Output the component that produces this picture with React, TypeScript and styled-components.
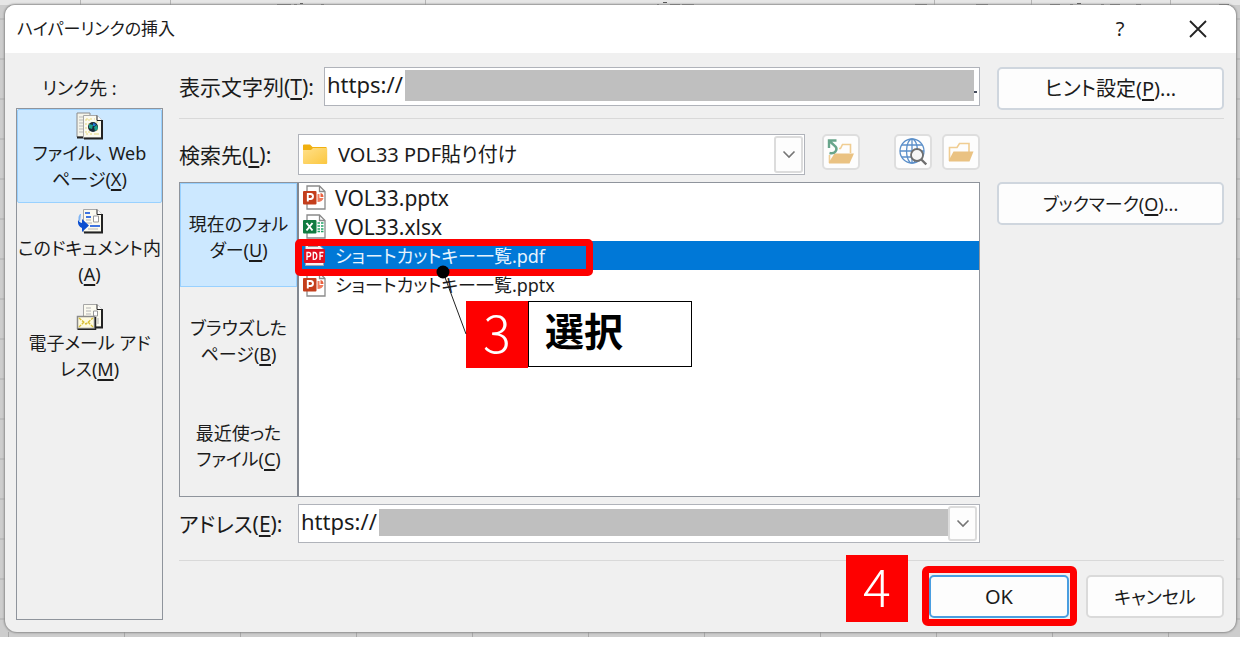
import React from "react";
import styled, { createGlobalStyle, css } from "styled-components";

const GlobalStyle = createGlobalStyle`
  *, *::before, *::after { box-sizing: border-box; }
  body {
    margin: 0;
    background: #fff;
    color: #1b1b1b;
    font-family: "Noto Sans", "Noto Sans CJK JP", sans-serif;
    font-size: 20px;
    line-height: 26px;
    font-feature-settings: "palt";
  }
  button, input, select {
    font: inherit;
    color: inherit;
    font-feature-settings: inherit;
    margin: 0;
    padding: 0;
  }
  u { text-decoration-thickness: 2px; text-underline-offset: 3px; }
`;

/* Spreadsheet that shows round the edge of the dialog */
const Sheet = styled.div`
  padding: 5px 4px 5px 5px;
  background:
    repeating-linear-gradient(90deg, transparent 0 8px, #a8a8a8 8px 9px, transparent 9px 116px) 0 100% / 100% 5px no-repeat,
    repeating-linear-gradient(180deg, transparent 0 18px, #bdbdbd 18px 20px, transparent 20px 40px) 0 0 / 100% 100%,
    #cdcdcd;
  position: relative;
`;

const RibbonEdge = styled.svg`
  position: absolute;
  left: 0;
  top: 0;
  display: block;
`;

const Dialog = styled.main`
  position: relative;
  background: #f0f0f0;
  border-radius: 10px 10px 12px 12px;
  overflow: hidden;
  box-shadow: 0 0 2px 1px #8e8e8e;
`;

const TitleBar = styled.header`
  display: flex;
  align-items: center;
  height: 48px;
  padding: 0 20px 0 12px;
  background: #fff;
`;

const Title = styled.h1`
  flex: 1;
  margin: 0;
  font-size: 17px;
  font-weight: 400;
`;

const TitleButton = styled.button`
  display: grid;
  place-items: center;
  width: 36px;
  height: 36px;
  margin-left: 42px;
  border: 0;
  background: none;
`;

const Body = styled.div`
  display: grid;
  grid-template-columns: 147px minmax(0, 1fr);
  column-gap: 16px;
  padding: 14px 12px 12px 11px;
`;

const Sidebar = styled.nav`
  display: flex;
  flex-direction: column;
`;

const SidebarLabel = styled.div`
  height: 41px;
  padding: 8px 20px 0 0;
  font-size: 18px;
  text-align: center;
`;

const LinkTargets = styled.div`
  flex: 1;
  border: 1px solid #8f949c;
`;

const selectedFill = css`
  background: #cce8ff;
  border-color: #99d1ff;
`;

const TargetButton = styled.button<{ $selected?: boolean }>`
  display: flex;
  flex-direction: column;
  align-items: center;
  width: 100%;
  height: 94px;
  margin-bottom: 1px;
  padding-top: 2px;
  border: 1px solid transparent;
  border-radius: 2px;
  background: none;
  font-size: 18px;
  white-space: nowrap;
  ${(p) => p.$selected && selectedFill}
  svg { flex: none; }
`;

const Main = styled.div`
  min-width: 0;
  padding-bottom: 2px;
`;

const Columns = styled.div`
  display: grid;
  grid-template-columns: minmax(0, 1fr) 227px;
  column-gap: 17px;
  align-items: start;
`;

const Divider = styled.hr`
  height: 1px;
  margin: 8px 0 15px;
  border: 0;
  background: #d9d9d9;
`;

const FooterDivider = styled(Divider)`
  margin: 17px 0 14px;
`;

const Field = styled.div`
  display: flex;
  align-items: center;
`;

const AddressField = styled(Field)`
  margin-top: 7px;
`;

const FieldLabel = styled.label<{ $wide?: boolean }>`
  flex: none;
  width: ${(p) => (p.$wide ? 145 : 119)}px;
  font-size: 21px;
  white-space: nowrap;
`;

const TextBox = styled.div`
  display: flex;
  align-items: center;
  flex: 1;
  min-width: 0;
  height: 39px;
  padding-right: 2px;
  border: 1px solid #b0b3ba;
  background: #fff;
`;

const UrlInput = styled.input`
  width: 80px;
  height: 30px;
  margin-bottom: 6px;
  padding-left: 2px;
  border: 0;
  outline: 0;
  background: none;
  font-size: 22px;
`;

const Masked = styled.span<{ $height: number }>`
  flex: 1;
  height: ${(p) => p.$height}px;
  margin-bottom: 2px;
  background: #bfbfbf;
`;

const Tick = styled.span`
  width: 3px;
  height: 2px;
  margin-top: 10px;
  background: #454c5c;
`;

const ArrowButton = styled.button`
  display: grid;
  place-items: center;
  flex: none;
  width: 29px;
  height: 35px;
  border: 2px solid #dcdcdc;
  border-radius: 3px;
  background: #fdfdfd;
`;

const FolderPicker = styled.div`
  position: relative;
  flex: 1;
  height: 41px;
`;

const FolderSelect = styled.select`
  appearance: none;
  width: 100%;
  height: 100%;
  padding: 0 32px 0 39px;
  border: 1px solid #b0b3ba;
  border-radius: 0;
  background: #fff;
`;

const PickerIcon = styled.span`
  position: absolute;
  left: 4px;
  top: 10px;
  pointer-events: none;
  svg { display: block; }
`;

const PickerArrow = styled.span`
  position: absolute;
  right: 2px;
  top: 2px;
  display: grid;
  place-items: center;
  width: 29px;
  height: 37px;
  border: 2px solid #dcdcdc;
  border-radius: 3px;
  background: #fdfdfd;
  pointer-events: none;
`;

const ToolButton = styled.button<{ $gap: number }>`
  display: grid;
  place-items: center;
  flex: none;
  align-self: flex-start;
  width: 38px;
  height: 36px;
  margin-left: ${(p) => p.$gap}px;
  border: 2px solid #dedede;
  border-radius: 5px;
  background: #fdfdfd;
`;

const PushButton = styled.button<{ $tone?: "blue" | "plain"; $kana?: boolean }>`
  width: 100%;
  height: 43px;
  border: 2px solid ${(p) => (p.$tone === "blue" ? "#4a9ee0" : p.$tone === "plain" ? "#dadada" : "#cfd6de")};
  border-radius: 5px;
  background: #fdfdfd;
  font-size: ${(p) => (p.$kana ? 18 : 20)}px;
  white-space: nowrap;
`;

const BookmarkSlot = styled.div`
  padding-top: 48px;
`;

const Browser = styled.div`
  display: grid;
  grid-template-columns: 117px minmax(0, 1fr);
  height: 315px;
  margin-top: 7px;
  border: 1px solid #8f949c;
`;

const Places = styled.div`
  display: grid;
  grid-template-rows: repeat(3, 1fr);
`;

const PlaceButton = styled.button<{ $selected?: boolean }>`
  padding-top: 4px;
  border: 1px solid transparent;
  background: none;
  font-size: 18px;
  white-space: nowrap;
  ${(p) => p.$selected && selectedFill}
`;

const FileList = styled.ul`
  margin: 0;
  padding: 0;
  border-left: 2px solid #828790;
  background: #fff;
  list-style: none;
`;

const FileRow = styled.li`
  position: relative;
`;

const FileButton = styled.button<{ $selected?: boolean; $kana?: boolean }>`
  display: flex;
  align-items: center;
  gap: 9px;
  width: 100%;
  height: 29px;
  padding-left: 4px;
  border: 0;
  background: ${(p) => (p.$selected ? "#0078d7" : "none")};
  color: ${(p) => (p.$selected ? "#e6f3fd" : "inherit")};
  font-size: ${(p) => (p.$kana ? 18 : 21)}px;
  white-space: nowrap;
  svg { flex: none; }
`;

const Highlight = styled.span`
  position: absolute;
  z-index: 1;
  left: -4px;
  top: -2px;
  width: 298px;
  height: 37px;
  border: 7px solid #fe0000;
  border-radius: 5px;
  pointer-events: none;
`;

const Leader = styled.svg`
  position: absolute;
  z-index: 3;
  left: 136px;
  top: 23px;
  pointer-events: none;
`;

const Callout = styled.div`
  position: absolute;
  z-index: 2;
  left: 167px;
  top: 60px;
  display: flex;
`;

const Step = styled.span<{ $raise: number }>`
  display: grid;
  place-items: center;
  width: 62px;
  height: 67px;
  padding-bottom: ${(p) => p.$raise}px;
  background: #fe0000;
  color: #fff;
  font-family: "Noto Sans CJK JP", sans-serif;
  font-size: 52px;
  font-weight: 300;
  line-height: 48px;
`;

const CalloutText = styled.strong`
  width: 164px;
  height: 66px;
  padding: 0 16px;
  border: 1px solid #000;
  background: #fff;
  color: #000;
  font-family: "Noto Sans CJK JP", sans-serif;
  font-size: 39px;
  line-height: 54px;
`;

const Actions = styled.div`
  display: flex;
  justify-content: flex-end;
  gap: 17px;
`;

const Action = styled.div<{ $width: number }>`
  position: relative;
  width: ${(p) => p.$width}px;
`;

const ActionFrame = styled.span`
  position: absolute;
  inset: -9px -8px -8px -7px;
  border: 7px solid #fe0000;
  border-radius: 6px;
  pointer-events: none;
`;

const ActionStep = styled.div`
  position: absolute;
  right: 161px;
  bottom: -4px;
`;

const Chevron = () => (
  <svg width="14" height="9" viewBox="0 0 14 9" fill="none" stroke="#757575" strokeWidth="1.6">
    <path d="M1.5 1.5 7 7l5.500-5.500" />
  </svg>
);

const FolderIcon = () => (
  <svg width="26" height="21" viewBox="0 0 26 21">
    <defs>
      <linearGradient id="folder" x1="0" y1="0" x2="1" y2="1">
        <stop offset="0" stopColor="#ffe08a" />
        <stop offset="1" stopColor="#fbc73f" />
      </linearGradient>
    </defs>
    <path d="M1 1.500Q1 .5 2 .5h6l2.500 2.500H24.500V8H1z" fill="#f0b010" />
    <path d="M1 6h8l2-2H24.500q.7 0 .7.8V19q0 1-1 1H2q-1 0-1-1z" fill="url(#folder)" />
  </svg>
);

const OpenFolderIcon = () => (
  <svg width="26" height="21" viewBox="0 0 26 21">
    <path d="M1.500 19V5.500H9L11.500 1.500H21V10" fill="none" stroke="#f0cd92" strokeWidth="1.600" />
    <path d="M1 19.500V18L5.500 9.500H25.500L21.500 19.500z" fill="#eac282" />
  </svg>
);

const UpFolderIcon = () => (
  <svg width="28" height="26" viewBox="0 0 28 26">
    <path d="M2.500 24V16M12 9.500h1.500l2-4h8V14" fill="none" stroke="#f0cd92" strokeWidth="1.600" />
    <path d="M2 24.500V23L7.500 14.500H27L22.500 24.500z" fill="#eac282" />
    <path d="M2 9V1.500H9.500M2.500 2 8.500 7.500Q10.500 10 8.500 12.500 6.500 15 2.500 14" fill="none" stroke="#68a58b" strokeWidth="2.400" />
  </svg>
);

const WebSearchIcon = () => (
  <svg width="28" height="28" viewBox="0 0 28 28" fill="none">
    <g stroke="#5b8fc9" strokeWidth="1.300">
      <circle cx="13" cy="13" r="12" />
      <ellipse cx="13" cy="13" rx="5.500" ry="12" />
      <path d="M13 1v24M1 13h24M3 7h20M3 19h20" />
    </g>
    <circle cx="18" cy="17" r="6" fill="#f6f6f6" stroke="#6e6e6e" strokeWidth="1.800" />
    <path d="m22.300 21.500 5 5" stroke="#6e6e6e" strokeWidth="2.400" />
  </svg>
);

const OfficeIcon = ({ kind }: { kind: "P" | "X" }) => {
  const tone = kind === "P" ? "#c43e1c" : "#107c41";
  return (
    <svg width="23" height="25" viewBox="0 0 23 25">
      <path d="M4 1H16.500L22 6.500V24H4z" fill="#fff" stroke="#8a8a8a" strokeWidth="1.300" />
      <path d="M16.500 1v5.500H22" fill="none" stroke="#8a8a8a" strokeWidth="1.300" />
      {kind === "P" ? (
        <g fill="#f07a5c">
          <path d="M14.500 9v8q5 0 6-4h-4V9z" />
          <path d="M17.500 8q3 .5 3 4h-3z" fill="#e9603f" />
        </g>
      ) : (
        <path d="M14.500 9h2.500m1 0h2.500M14.500 12h2.500m1 0h2.500M14.500 15h2.500m1 0h2.500M14.500 17.500h2.500m1 0h2.500" stroke="#21a366" strokeWidth="1.600" />
      )}
      <rect x="0" y="6" width="13.500" height="13.500" rx="1" fill={tone} />
      {kind === "P" ? (
        <path d="M4.800 16.500V9H7.500q2.500.2 2.500 2.500T7.500 14H5" fill="none" stroke="#fff" strokeWidth="1.900" />
      ) : (
        <path d="m3.500 9 6 7.500M9.500 9l-6 7.500" stroke="#fff" strokeWidth="2" />
      )}
    </svg>
  );
};

const PdfIcon = () => (
  <svg width="23" height="25" viewBox="0 0 23 25">
    <path d="M2.500 1H15l5.500 5V22.500h-18z" fill="#f3f3f3" stroke="#9aa6b4" />
    <path d="M5 3.500h10" stroke="#999" />
    <rect x="1" y="6" width="21" height="14" rx="1" fill="#e01020" />
    <path d="M4 17V9.500h1.800q1.900 0 1.900 2t-1.900 2H4.200M10.300 16.300V9.500h1.200q2.300.2 2.300 3.400t-2.300 3.400zM17 17V9.500h3.500M17 13h3" fill="none" stroke="#fff" strokeWidth="1.300" />
  </svg>
);

const Page = ({ x, y }: { x: number; y: number }) => (
  <g transform={`translate(${x} ${y})`}>
    <path d="M.5.5H14l5 5V23H.5z" fill="#fbfaf0" stroke="#a7a7a7" />
    <path d="M14 .5v5h5" fill="#fff" stroke="#222" />
    <path d="M19 5v18.500H1" fill="none" stroke="#222" strokeWidth="2" />
  </g>
);

const WebPageIcon = () => (
  <svg width="28" height="28" viewBox="0 0 28 28">
    <path d="M1 1h13v24H1z" fill="#f4f4ea" stroke="#8c8c8c" />
    <path d="M3 5h4M3 8h4M3 11h4M3 14h4M3 17h4M3 20h4" stroke="#b9b9b9" />
    <path d="M1 25.500h8" stroke="#222" strokeWidth="2" />
    <Page x={7} y={3} />
    <path d="M10 7v16M13 7v16M21 9v14M10 7h9M10 22h13" stroke="#e6d77c" strokeDasharray="2 2" />
    <circle cx="17" cy="15" r="5" fill="#1b2b3a" />
    <path d="m13 12 4 1-1 4-3-1zM18 15l3-2 1 4-3 2z" fill="#1fa08c" />
    <path d="m17 11 3 1-1 2-2 0z" fill="#1e78d8" />
  </svg>
);

const DocumentIcon = () => (
  <svg width="28" height="28" viewBox="0 0 28 28">
    <g transform="translate(0 1)">
      <Page x={7} y={1} />
      <path d="M9 5h5M14 18h10M10 9h5" stroke="#3f74e0" strokeWidth="1.800" />
      <path d="M10 12h5M10 15h6M12 21h10" stroke="#b4b4b4" />
      <path d="M17.500 8h5v6h-5z" fill="#fff" stroke="#999" />
      <path d="M4 6Q0 14 6 15V11L13 17.500 6 24V20Q-1 17 4 6z" fill="#0c4fd0" />
      <path d="M4 6Q1 10 4 14L5 6z" fill="#7db4f5" />
    </g>
  </svg>
);

const MailIcon = () => (
  <svg width="28" height="28" viewBox="0 0 28 28">
    <Page x={7} y={2} />
    <path d="M10 6h5M10 9h5M10 12h5M22 16v6" stroke="#b4b4b4" />
    <path d="M17.500 9h4v5h-4z" fill="#fff" stroke="#999" />
    <path d="M1.500 14.500h17v12h-17z" fill="#fffbe0" stroke="#8a8a8a" strokeWidth="1.500" />
    <path d="m3 16 7 6 7-6M3 25l5-5M17 25l-5-5" fill="none" stroke="#d9c037" strokeWidth="1.400" strokeDasharray="3 1" />
    <path d="M19.500 15v12.500H1.500" fill="none" stroke="#222" strokeWidth="1.500" />
  </svg>
);

export default function App() {
  return (
    <>
      <GlobalStyle />
      <Sheet>
        <RibbonEdge width="100%" height="5" aria-hidden="true">
          <rect width="100%" height="5" fill="#e6e6e6" />
          <path d="M80.500 0v5M170.500 0v5M425.500 0v5M934.500 0v5M1031.500 0v5M1170.500 0v5" stroke="#b5b5b5" />
          <path d="M277 4.500h14M294 4.500h3M300 3.500h3M321 4.500h3M657 4.500h2M663 2.500h4M670 4.500h10M682 4.500h12M915 4.500h12M976 4.500h12M1050 4.500h10M1070 4.500h3M1077 3.500h4M1101 4.500h3M1110 4.500h10M1136 4.500h5M1219 4.500h10" stroke="#555" />
        </RibbonEdge>
        <Dialog>
          <TitleBar>
            <Title>ハイパーリンクの挿入</Title>
            <TitleButton aria-label="ヘルプ">?</TitleButton>
            <TitleButton aria-label="閉じる">
              <svg width="18" height="18" viewBox="0 0 18 18" stroke="#222" strokeWidth="1.800">
                <path d="m1 1 16 16M17 1 1 17" />
              </svg>
            </TitleButton>
          </TitleBar>
          <Body>
            <Sidebar>
              <SidebarLabel>リンク先 :</SidebarLabel>
              <LinkTargets>
                <TargetButton $selected>
                  <WebPageIcon />
                  <span>ファイル、 Web<br />ページ(<u>X</u>)</span>
                </TargetButton>
                <TargetButton>
                  <DocumentIcon />
                  <span>このドキュメント内<br />(<u>A</u>)</span>
                </TargetButton>
                <TargetButton>
                  <MailIcon />
                  <span>電子メール アド<br />レス(<u>M</u>)</span>
                </TargetButton>
              </LinkTargets>
            </Sidebar>
            <Main>
              <Columns>
                <Field>
                  <FieldLabel $wide htmlFor="display">表示文字列(<u>T</u>):</FieldLabel>
                  <TextBox>
                    <UrlInput id="display" defaultValue="https://" />
                    <Masked $height={31} />
                    <Tick />
                  </TextBox>
                </Field>
                <PushButton>ヒント設定(<u>P</u>)...</PushButton>
              </Columns>
              <Divider />
              <Columns>
                <div>
                  <Field>
                    <FieldLabel htmlFor="folder-select">検索先(<u>L</u>):</FieldLabel>
                    <FolderPicker>
                      <FolderSelect id="folder-select">
                        <option>VOL33 PDF貼り付け</option>
                      </FolderSelect>
                      <PickerIcon><FolderIcon /></PickerIcon>
                      <PickerArrow><Chevron /></PickerArrow>
                    </FolderPicker>
                    <ToolButton $gap={17} aria-label="1 つ上のフォルダー"><UpFolderIcon /></ToolButton>
                    <ToolButton $gap={34} aria-label="Web の検索"><WebSearchIcon /></ToolButton>
                    <ToolButton $gap={10} aria-label="ファイルの参照"><OpenFolderIcon /></ToolButton>
                  </Field>
                  <Browser>
                    <Places>
                      <PlaceButton $selected>現在のフォル<br />ダー(<u>U</u>)</PlaceButton>
                      <PlaceButton>ブラウズした<br />ページ(<u>B</u>)</PlaceButton>
                      <PlaceButton>最近使った<br />ファイル(<u>C</u>)</PlaceButton>
                    </Places>
                    <FileList>
                      <FileRow><FileButton><OfficeIcon kind="P" />VOL33.pptx</FileButton></FileRow>
                      <FileRow><FileButton><OfficeIcon kind="X" />VOL33.xlsx</FileButton></FileRow>
                      <FileRow>
                        <FileButton $selected $kana><PdfIcon />ショートカットキー一覧.pdf</FileButton>
                        <Highlight />
                        <Callout>
                          <Step $raise={8}>3</Step>
                          <CalloutText>選択</CalloutText>
                        </Callout>
                        <Leader width="32" height="70" aria-hidden="true">
                          <path d="M8 8 31 70" stroke="#222" />
                          <circle cx="8" cy="8" r="6.500" fill="#000" />
                        </Leader>
                      </FileRow>
                      <FileRow><FileButton $kana><OfficeIcon kind="P" />ショートカットキー一覧.pptx</FileButton></FileRow>
                    </FileList>
                  </Browser>
                  <AddressField>
                    <FieldLabel htmlFor="address">アドレス(<u>E</u>):</FieldLabel>
                    <TextBox>
                      <UrlInput id="address" defaultValue="https://" />
                      <Masked $height={27} />
                      <ArrowButton aria-label="アドレスの履歴"><Chevron /></ArrowButton>
                    </TextBox>
                  </AddressField>
                </div>
                <BookmarkSlot>
                  <PushButton $kana>ブックマーク(<u>O</u>)...</PushButton>
                </BookmarkSlot>
              </Columns>
              <FooterDivider />
              <Actions>
                <Action $width={140}>
                  <PushButton $tone="blue">OK</PushButton>
                  <ActionFrame />
                  <ActionStep><Step $raise={8}>4</Step></ActionStep>
                </Action>
                <Action $width={138}>
                  <PushButton $tone="plain" $kana>キャンセル</PushButton>
                </Action>
              </Actions>
            </Main>
          </Body>
        </Dialog>
      </Sheet>
    </>
  );
}
